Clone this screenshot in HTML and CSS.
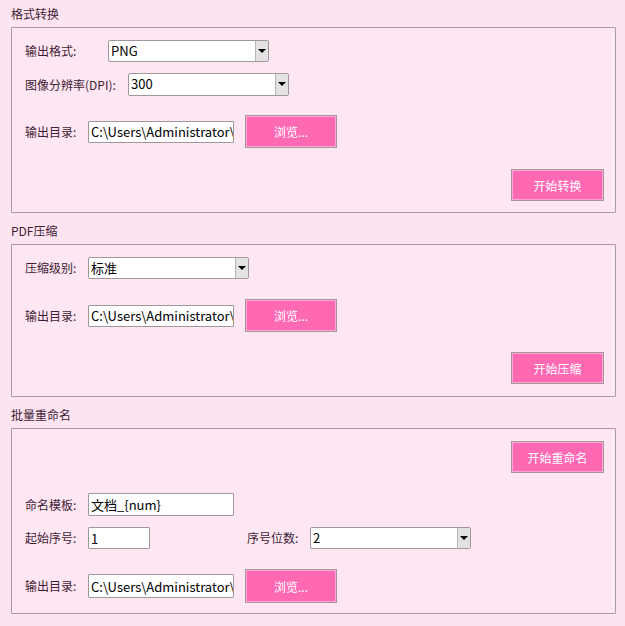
FILE: index.html
```html
<!DOCTYPE html>
<html lang="zh-CN">
<head>
<meta charset="utf-8">
<title>PDF工具</title>
<link rel="stylesheet" href="styles.css">
</head>
<body>
<div class="page">
  <section class="group">
    <div class="group-title">格式转换</div>
    <div class="frame f1">
      <div class="row r-fmt">
        <span class="label w-fmt">输出格式:</span>
        <div class="combo w160"><span class="val">PNG</span><span class="arrow"></span></div>
      </div>
      <div class="row r-dpi">
        <span class="label w-dpi">图像分辨率(DPI):</span>
        <div class="combo w160"><span class="val">300</span><span class="arrow"></span></div>
      </div>
      <div class="row r-dir">
        <span class="label w-dir">输出目录:</span>
        <input class="input w145" type="text" value="C:\Users\Administrator\Desktop" readonly>
        <button class="btn browse">浏览...</button>
      </div>
      <div class="row r-act">
        <button class="btn action">开始转换</button>
      </div>
    </div>
  </section>

  <section class="group">
    <div class="group-title">PDF压缩</div>
    <div class="frame f2">
      <div class="row r-lvl">
        <span class="label w-dir">压缩级别:</span>
        <div class="combo w160"><span class="val">标准</span><span class="arrow"></span></div>
      </div>
      <div class="row r-dir2">
        <span class="label w-dir">输出目录:</span>
        <input class="input w145" type="text" value="C:\Users\Administrator\Desktop" readonly>
        <button class="btn browse">浏览...</button>
      </div>
      <div class="row r-act2">
        <button class="btn action">开始压缩</button>
      </div>
    </div>
  </section>

  <section class="group">
    <div class="group-title">批量重命名</div>
    <div class="frame f3">
      <div class="row r-act3">
        <button class="btn action">开始重命名</button>
      </div>
      <div class="row r-tpl">
        <span class="label w-dir">命名模板:</span>
        <input class="input w145" type="text" value="文档_{num}" readonly>
      </div>
      <div class="row r-num">
        <span class="label w-dir">起始序号:</span>
        <input class="input w61" type="text" value="1" readonly>
        <span class="label w-digits">序号位数:</span>
        <div class="combo w160"><span class="val">2</span><span class="arrow"></span></div>
      </div>
      <div class="row r-dir3">
        <span class="label w-dir">输出目录:</span>
        <input class="input w145" type="text" value="C:\Users\Administrator\Desktop" readonly>
        <button class="btn browse">浏览...</button>
      </div>
    </div>
  </section>
</div>
</body>
</html>
```

FILE: styles.css
```css
* { box-sizing: border-box; }
html, body {
  margin: 0;
  padding: 0;
  background: #fde4f0;
}
body {
  width: 625px;
  height: 626px;
  overflow: hidden;
  font-family: "Noto Sans CJK SC", "Noto Sans", sans-serif;
  font-size: 12px;
  color: #3f1d35;
}
.page {
  padding: 5px 9px 0 11px;
  display: flex;
  flex-direction: column;
}
.group { display: flex; flex-direction: column; }
.group + .group { margin-top: 9px; }
.group-title {
  height: 18px;
  line-height: 18px;
  margin-bottom: 4px;
}
.frame {
  border: 1px solid #a39ca0;
  border-radius: 1px;
  background: #fee6f2;
  padding: 0 11px 0 13px;
  display: flex;
  flex-direction: column;
}
.f1 { height: 186px; padding-top: 12px; }
.f2 { height: 153px; padding-top: 12px; }
.f3 { height: 186px; padding-top: 12px; }

.row {
  display: flex;
  align-items: center;
}
.label {
  flex: none;
  white-space: nowrap;
  line-height: 16px;
}
.w-fmt { width: 83px; }
.w-dpi { width: 103px; }
.w-dir { width: 63px; }
.w-digits { width: 63px; margin-left: 97px; }

.r-fmt { height: 22px; }
.r-dpi { height: 23px; margin-top: 11px; }
.r-dir { height: 33px; margin-top: 19px; }
.r-act { height: 32px; margin-top: 21px; justify-content: flex-end; }

.r-lvl { height: 22px; }
.r-dir2 { height: 33px; margin-top: 20px; }
.r-act2 { height: 32px; margin-top: 20px; justify-content: flex-end; }

.r-act3 { height: 32px; justify-content: flex-end; }
.r-tpl { height: 23px; margin-top: 20px; }
.r-num { height: 22px; margin-top: 11px; }
.r-dir3 { height: 34px; margin-top: 20px; }

.combo {
  flex: none;
  height: 22px;
  border: 1px solid #9d989b;
  border-radius: 2px;
  background: #ffffff;
  display: flex;
  align-items: stretch;
  color: #000;
  font-size: 13px;
}
.r-dpi .combo { height: 23px; }
.combo .val {
  flex: 1;
  padding-left: 2px;
  line-height: 20px;
}
.combo .arrow {
  width: 13px;
  flex: none;
  background: #e3e1e2;
  border-left: 1px solid #b9b5b7;
  position: relative;
}
.combo .arrow::after {
  content: "";
  position: absolute;
  left: 2px;
  top: 8px;
  border-left: 4px solid transparent;
  border-right: 4px solid transparent;
  border-top: 4px solid #000;
}
.w160 { width: 161px; }
.w145 { width: 146px; }
.w61 { width: 62px; }

.input {
  flex: none;
  height: 22px;
  margin: 0;
  border: 1px solid #9d989b;
  border-radius: 1px;
  background: #fff;
  color: #000;
  font-family: "Noto Sans CJK SC", "Noto Sans", sans-serif;
  font-size: 13px;
  line-height: 20px;
  padding: 0 0 0 2px;
  outline: none;
}
.r-tpl .input { height: 23px; }
.r-dir3 .input { height: 24px; }

.btn {
  flex: none;
  font-family: "Noto Sans CJK SC", "Noto Sans", sans-serif;
  font-size: 12px;
  color: #ffffff;
  background: #ff69b4;
  border: 1px solid #a3979c;
  box-shadow: inset 0 0 0 1px #ffa6d2;
  border-radius: 0;
  padding: 0;
  margin: 0;
  cursor: pointer;
}
.browse {
  width: 92px;
  height: 33px;
  margin-left: 11px;
}
.r-dir3 .browse { height: 34px; }
.action {
  width: 93px;
  height: 32px;
}
```
